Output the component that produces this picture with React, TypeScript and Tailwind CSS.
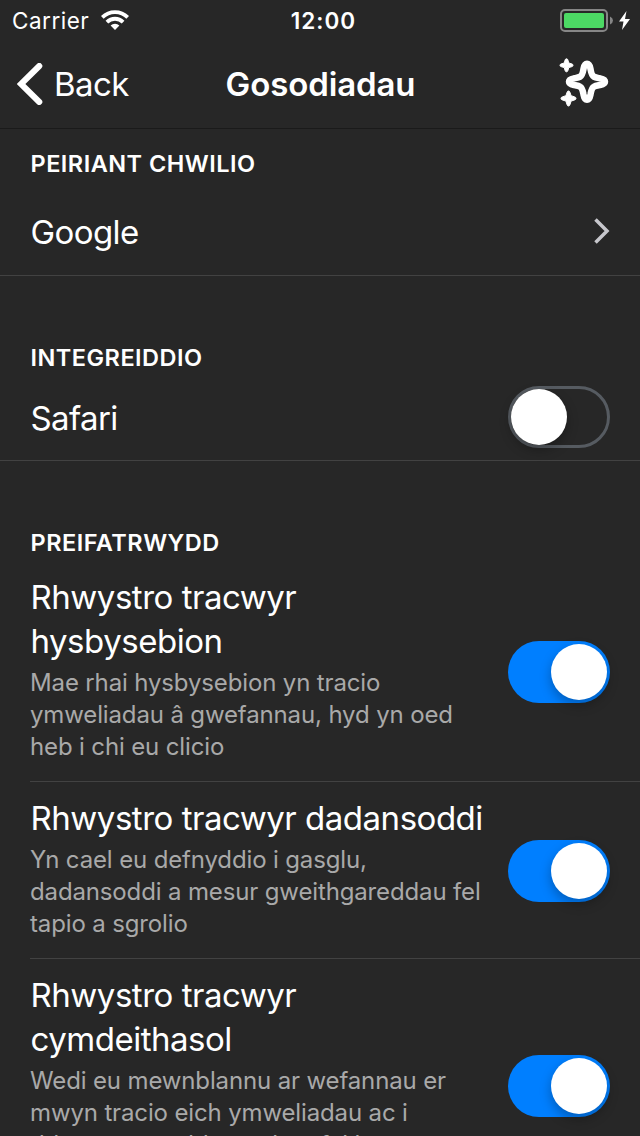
import { useState } from "react";

function StatusBar() {
  return (
    <div className="grid h-10 grid-cols-3 items-center pt-0.5 pl-3 pr-2 text-[22.5px] leading-[38px]">
      <div className="flex items-center gap-3">
        <span className="tracking-[0.5px]">Carrier</span>
        <svg className="-mt-0.5" width="28" height="20" viewBox="0 0 28 20" fill="none" stroke="#fff" strokeWidth="3.8">
          <path d="M1.3 7.4a18 18 0 0 1 25.4 0" />
          <path d="M5.9 12.1a11.5 11.5 0 0 1 16.2 0" />
          <path d="M14 20l-4.4-4.4a6.2 6.2 0 0 1 8.8 0z" fill="#fff" stroke="none" />
        </svg>
      </div>
      <span className="pl-[3px] text-center font-semibold tracking-[1px]">12:00</span>
      <div className="flex items-center justify-end">
        <svg width="72" height="24" viewBox="0 0 72 24">
          <rect x="1" y="1" width="46" height="21" rx="4" fill="none" stroke="#868686" strokeWidth="2" />
          <rect x="4" y="4" width="40" height="15" rx="2" fill="#4cd964" />
          <path d="M50 7.5q3 1.500 3 4t-3 4z" fill="#868686" />
          <path d="M66.500 2L59 12.500h4.500L62 21l8-11h-5z" fill="#fff" />
        </svg>
      </div>
    </div>
  );
}

function NavBar() {
  return (
    <div className="grid h-[89px] grid-cols-[1fr_auto_1fr] items-center border-b border-[#1a1a1a] px-[17px]">
      <div className="flex items-center gap-[11px]">
        <svg width="26" height="42" viewBox="0 0 26 42" fill="none" stroke="#fff" strokeWidth="6" strokeLinecap="round">
          <path d="M22.300 3L4 21l18.300 18" strokeLinejoin="miter" />
        </svg>
        <span className="pt-0.5 text-[33px] tracking-[-0.6px]">Back</span>
      </div>
      <h1 className="pt-0.5 pl-px text-[33px] font-semibold tracking-[-0.1px]">Gosodiadau</h1>
      <svg className="-mt-0.5 mr-3.5 justify-self-end" width="50" height="50" viewBox="0 0 50 50">
        <path
          d="M28 5.700C30.800 5.700 31 8.500 31.600 11.500C32.300 15.500 33 17.600 34.800 18.600C36.500 19.600 38 19.800 40.500 20.300C43.500 20.900 46 21.200 46 23.700S43.500 26.500 40.500 27.100C38 27.600 36.500 27.800 34.800 28.800C33 29.800 32.300 31.900 31.600 35.900C31 38.900 30.800 41.700 28 41.700S25 38.900 24.400 35.900C23.700 31.900 23 29.800 21.200 28.800C19.500 27.800 18 27.600 15.500 27.100C12.500 26.500 10 26.200 10 23.700S12.500 20.900 15.500 20.300C18 19.800 19.500 19.600 21.200 18.600C23 17.600 23.700 15.500 24.400 11.500C25 8.500 25.200 5.700 28 5.700z"
          fill="none"
          stroke="#fff"
          strokeWidth="6.500"
          strokeLinejoin="round"
        />
        <g fill="#fff" stroke="#fff" strokeWidth="1">
          <path d="M7.500 .800q1 0 1.300 1l1 3.200 3.200 1q1 .3 1 1.300t-1 1.300l-3.200 1-1 3.200q-.3 1-1.300 1t-1.300-1l-1-3.200-3.200-1q-1-.3-1-1.300t1-1.300l3.200-1 1-3.200q.3-1 1.300-1z" />
          <path d="M9.500 33q1 0 1.400 1.200l1.200 3.500 3.600 1.200q1.300.4 1.300 1.500t-1.300 1.500l-3.600 1.200-1.200 3.700q-.4 1.200-1.400 1.200t-1.400-1.200l-1.200-3.700-3.600-1.200q-1.300-.4-1.300-1.500t1.300-1.500l3.600-1.200 1.200-3.500q.4-1.200 1.400-1.200z" />
        </g>
      </svg>
    </div>
  );
}

function Toggle({ initial, label }: { initial: boolean; label: string }) {
  const [on, setOn] = useState(initial);
  return (
    <button
      role="switch"
      aria-checked={on}
      aria-label={label}
      onClick={() => setOn(!on)}
      className={
        on
          ? "flex h-[62px] w-[102px] shrink-0 items-center justify-end rounded-full bg-[#007fff] pr-[3px]"
          : "flex h-[62px] w-[102px] shrink-0 items-center justify-start rounded-full border-[3px] border-[#565b61]"
      }
    >
      <span className="size-14 rounded-full bg-white shadow-[0_5px_12px_rgba(0,0,0,0.28)]" />
    </button>
  );
}

function SectionTitle({ children }: { children: string }) {
  return <h2 className="h-8 text-[23.5px] leading-8 font-semibold tracking-[0.48px]">{children}</h2>;
}

type Tracker = { title: string[]; detail: string[]; row: string };

const trackers: Tracker[] = [
  {
    title: ["Rhwystro tracwyr", "hysbysebion"],
    detail: ["Mae rhai hysbysebion yn tracio", "ymweliadau â gwefannau, hyd yn oed", "heb i chi eu clicio"],
    row: "h-[221px] pt-[14px]",
  },
  {
    title: ["Rhwystro tracwyr dadansoddi"],
    detail: ["Yn cael eu defnyddio i gasglu,", "dadansoddi a mesur gweithgareddau fel", "tapio a sgrolio"],
    row: "h-[177px] pt-[14px]",
  },
  {
    title: ["Rhwystro tracwyr", "cymdeithasol"],
    detail: ["Wedi eu mewnblannu ar wefannau er", "mwyn tracio eich ymweliadau ac i", "ddangos swyddogaethau fel botymau"],
    row: "h-[253px] pt-[14px]",
  },
];

function TrackerRow({ title, detail, row }: Tracker) {
  return (
    <div className={`ml-[30px] flex items-start justify-between border-b border-[#424242] pr-[30px] ${row}`}>
      <div className="whitespace-nowrap">
        {title.map((line) => (
          <div key={line} className="h-11 pl-[0.5px] text-[33px] leading-11 tracking-[-0.48px]">{line}</div>
        ))}
        <div className="pt-1 text-[24px] leading-8 tracking-[-0.14px] text-[#a9a9a9]">
          {detail.map((line) => (
            <div key={line}>{line}</div>
          ))}
        </div>
      </div>
      <div className="-mt-1.5 flex h-full items-center">
        <Toggle initial label={title.join(" ")} />
      </div>
    </div>
  );
}

export default function App() {
  return (
    <div className="h-[1136px] w-[640px] overflow-hidden bg-[#272727] font-['Inter',sans-serif] text-white">
      <StatusBar />
      <NavBar />
      <section className="h-[147px] border-b border-[#424242] pr-[30px] pl-[30.5px] pt-[19px]">
        <SectionTitle>PEIRIANT CHWILIO</SectionTitle>
        <div className="flex h-[104px] items-center justify-between">
          <span className="pt-0.5 text-[33px] tracking-[-0.6px]">Google</span>
          <svg className="-mt-0.5" width="16" height="26" viewBox="0 0 16 26" fill="none" stroke="#c7c7cc" strokeWidth="3.500">
            <path d="M1.500 1.500L13 13 1.500 24.500" />
          </svg>
        </div>
      </section>
      <section className="h-[185px] border-b border-[#424242] pr-[30px] pl-[30.5px] pt-[66px]">
        <SectionTitle>INTEGREIDDIO</SectionTitle>
        <div className="flex h-[86px] items-center justify-between">
          <span className="pt-1 text-[33px] tracking-[-0.6px]">Safari</span>
          <Toggle initial={false} label="Safari" />
        </div>
      </section>
      <section>
        <div className="h-[100px] pr-[30px] pl-[30.5px] pt-[66px]">
          <SectionTitle>PREIFATRWYDD</SectionTitle>
        </div>
        {trackers.map((tracker) => (
          <TrackerRow key={tracker.detail[0]} {...tracker} />
        ))}
      </section>
    </div>
  );
}
